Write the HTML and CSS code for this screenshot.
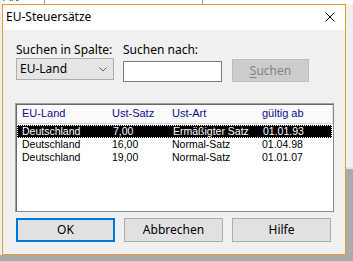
FILE: index.html
```html
<!DOCTYPE html>
<html lang="de">
<head>
<meta charset="utf-8">
<title>EU-Steuersätze</title>
<link rel="stylesheet" href="styles.css">
</head>
<body>
<div class="bgwin">
  <div class="bghead">
    <div class="bgcell c1"><span class="bgtext">Art</span></div>
    <div class="bgcell c2"></div>
    <div class="bgcell c3"></div>
  </div>
</div>
<div class="bgstrip"></div>

<div class="dialog">
  <div class="titlebar">
    <span class="title">EU-Steuersätze</span>
    <svg class="close" width="10" height="10" viewBox="0 0 10 10"><path d="M0.5 0.5 L9.5 9.5 M9.5 0.5 L0.5 9.5" stroke="#000" stroke-width="1" fill="none"/></svg>
  </div>
  <div class="content">
    <div class="search">
      <label class="lbl">Suchen in Spalte:</label>
      <label class="lbl">Suchen nach:</label>
      <span></span>
      <div class="combo"><span>EU-Land</span><svg class="chev" width="8" height="5" viewBox="0 0 8 5"><path d="M0.5 0.5 L4 4 L7.5 0.5" stroke="#5a5a5a" stroke-width="1" fill="none"/></svg></div>
      <div class="input"></div>
      <div class="btn disabled"><u>S</u>uchen</div>
    </div>

    <div class="list">
      <div class="list-inner">
        <div class="row head">
          <span class="c1">EU-Land</span><span class="c2">Ust-Satz</span><span class="c3">Ust-Art</span><span class="c4">gültig ab</span>
        </div>
        <div class="row sel">
          <span class="c1">Deutschland</span><span class="c2">7,00</span><span class="c3">Ermäßigter Satz</span><span class="c4">01.01.93</span>
        </div>
        <div class="row">
          <span class="c1">Deutschland</span><span class="c2">16,00</span><span class="c3">Normal-Satz</span><span class="c4">01.04.98</span>
        </div>
        <div class="row">
          <span class="c1">Deutschland</span><span class="c2">19,00</span><span class="c3">Normal-Satz</span><span class="c4">01.01.07</span>
        </div>
      </div>
    </div>

    <div class="buttons">
      <div class="btn default">OK</div>
      <div class="btn">Abbrechen</div>
      <div class="btn">Hilfe</div>
    </div>
  </div>
</div>
</body>
</html>
```
FILE: styles.css
```css
html, body {
  margin: 0;
  padding: 0;
}
body {
  width: 353px;
  height: 261px;
  overflow: hidden;
  position: relative;
  background: #ababab;
  font-family: "Noto Sans", "Open Sans", sans-serif;
  font-size: 12px;
  color: #000;
}

/* background application behind the dialog */
.bgwin {
  position: absolute;
  left: 0;
  top: 0;
  width: 353px;
  height: 167px;
  background: #f0f0f0;
  border-bottom: 2px solid #d6e6f5;
}
.bgstrip {
  position: absolute;
  left: 0;
  top: 0;
  width: 2px;
  height: 255px;
  background: #f0f0f0;
}
.bghead {
  display: flex;
  height: 4px;
  overflow: hidden;
  background: #fff;
}
.bgcell {
  position: relative;
  border-right: 1px solid #a0a0a0;
  overflow: hidden;
}
.bgcell.c1 { width: 44px; }
.bgcell.c2 { width: 157px; }
.bgcell.c3 { flex: 1; border-right: none; }
.bgtext {
  position: absolute;
  left: 3px;
  top: -10px;
  font-family: "Liberation Sans", sans-serif;
  font-size: 12px;
  color: #505050;
}

/* dialog window */
.dialog {
  position: absolute;
  left: 2px;
  top: 4px;
  width: 344px;
  height: 251px;
  box-sizing: border-box;
  border: 1px solid #e8982e;
  background: #f0f0f0;
  display: flex;
  flex-direction: column;
}
.titlebar {
  height: 25px;
  background: #fff;
  display: flex;
  align-items: center;
  justify-content: space-between;
  padding: 0 10px 0 3px;
}
.title {
  font-size: 12px;
  line-height: 16px;
  margin-top: -1px;
}
.close {
  display: block;
  margin-top: -1px;
}

.content {
  padding: 14px 0 0 13px;
}

.search {
  display: grid;
  grid-template-columns: 98px 99px 78px;
  grid-template-rows: 14px 24px;
  column-gap: 9px;
}
.lbl {
  font-size: 12px;
  line-height: 12px;
  white-space: nowrap;
}
.combo {
  height: 22px;
  box-sizing: border-box;
  border: 1px solid #adadad;
  background: #e5e5e5;
  display: flex;
  align-items: center;
  justify-content: space-between;
  padding: 0 6px 0 3px;
  line-height: 14px;
}
.chev { display: block; }
.input {
  margin-top: 3px;
  height: 21px;
  box-sizing: border-box;
  border: 1px solid #7a7a7a;
  background: #fff;
}
.btn {
  box-sizing: border-box;
  border: 1px solid #adadad;
  background: #e1e1e1;
  display: flex;
  align-items: center;
  justify-content: center;
  line-height: 14px;
}
.search .btn {
  margin-left: 1px;
  margin-top: 1px;
  height: 23px;
}
.btn.disabled {
  background: #cccccc;
  border-color: #bfbfbf;
  color: #838383;
}
.btn u { text-underline-offset: 2px; }

/* list view */
.list {
  margin: 21px 0 0 -1px;
  width: 319px;
  height: 109px;
  box-sizing: border-box;
  border: 1px solid #a0a0a0;
  border-right-color: #828790;
  border-bottom-color: #828790;
  background: #fff;
}
.list-inner {
  height: 100%;
  box-sizing: border-box;
  border-top: 1px solid #696969;
  border-left: 1px solid #696969;
  font-family: "Liberation Sans", "Arial", sans-serif;
  font-size: 10.5px;
}
.row {
  display: flex;
  height: 13px;
  line-height: 13px;
  white-space: nowrap;
  box-sizing: border-box;
}
.row span { padding-left: 5px; box-sizing: border-box; }
.row .c1 { width: 90px; }
.row .c2 { width: 60px; }
.row .c3 { width: 90px; }
.row .c4 { flex: 1; }
.row.head {
  height: 19px;
  line-height: 17px;
  color: #0b0b8c;
  background: #fbfbfb;
  border-bottom: 1px solid #d5d5d5;
  border-right: 1px solid #e0e0e0;
  font-size: 11px;
}
.row.sel {
  background: #000;
  color: #fff;
  border: 1px dotted #fff;
  line-height: 11px;
  margin-top: 1px;
  margin-right: 1px;
}
.row.sel span:first-child { padding-left: 4px; }

/* bottom buttons */
.buttons {
  display: flex;
  gap: 9px;
  margin-top: 6px;
}
.buttons .btn {
  width: 99px;
  height: 24px;
}
.btn.default {
  border: 2px solid #0078d7;
}
```
